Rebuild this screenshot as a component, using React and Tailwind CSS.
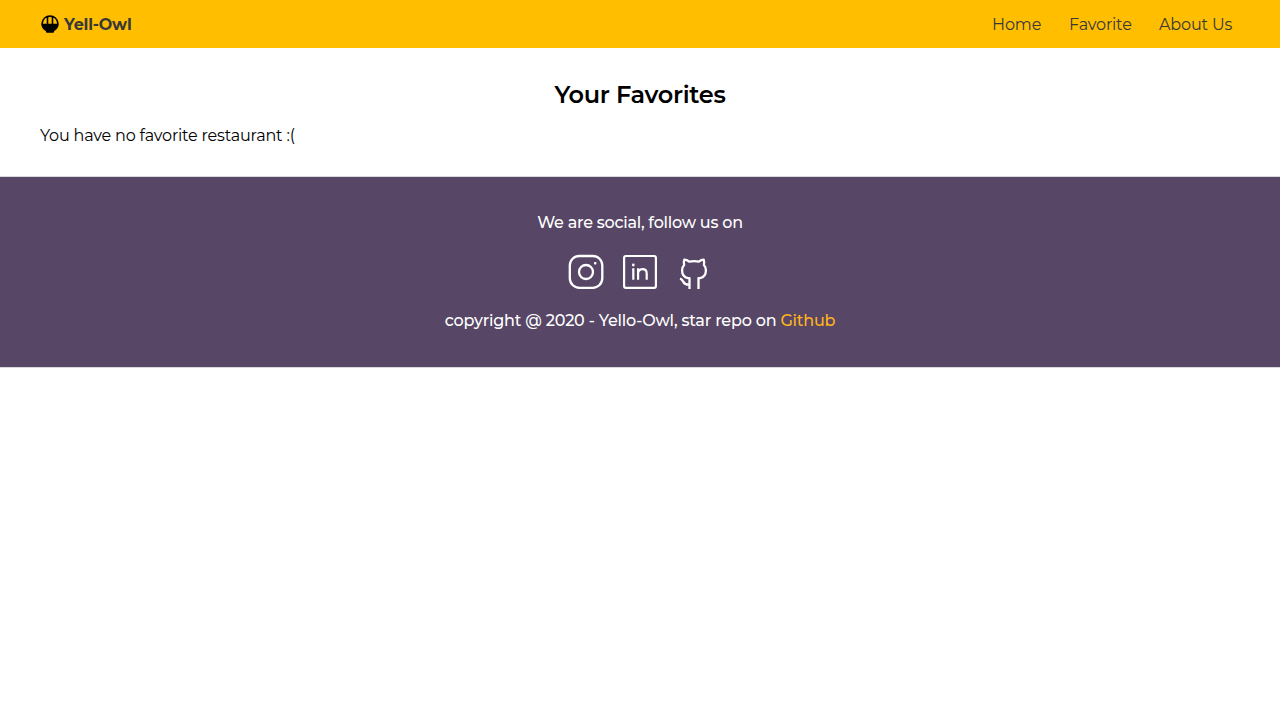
const navItems = [
  { label: 'Home', cls: 'w-[50px] tracking-[-0.1px]' },
  { label: 'Favorite', cls: 'w-[63px] tracking-[-0.15px]' },
  { label: 'About Us', cls: 'w-[74px] tracking-[-0.12px]' },
];

function BowlIcon() {
  return (
    <svg className="h-5 w-5" viewBox="0 0 20 20" aria-hidden="true">
      <path d="M2.200 10V9.200C2.600 5 5.800 2.100 10 2.100s7.400 2.900 7.800 7.100V10" fill="none" stroke="#000" strokeWidth="1.600" />
      <path d="M7.500 3v7M12.500 3v7" stroke="#000" strokeWidth="1.600" />
      <path d="M1.200 9.700h17.600c0 3.100-1.900 5.900-4.600 7.200l-.6 1.800H6.400l-.6-1.800C3.100 15.600 1.200 12.800 1.200 9.700Z" />
    </svg>
  );
}

function InstagramIcon() {
  return (
    <svg className="h-9 w-9" viewBox="0 0 36 36" fill="none" stroke="#fff" strokeWidth="2.300" aria-hidden="true">
      <rect x="1.800" y="2" width="32.500" height="31.800" rx="9.500" />
      <circle cx="18" cy="18" r="7" />
      <rect x="26" y="8" width="2.400" height="2.400" rx="0.700" fill="#fff" stroke="none" />
    </svg>
  );
}

function LinkedinIcon() {
  return (
    <svg className="h-9 w-9" viewBox="0 0 36 36" fill="none" stroke="#fff" strokeWidth="2.200" aria-hidden="true">
      <rect x="2.100" y="2" width="31.800" height="31.800" rx="1.800" />
      <path d="M11.300 14.300v11.400M16.100 14.300v11.400M16.100 19.500c0-2.600 1.600-4.300 4.300-4.300s4.300 1.700 4.300 4.300v6.200" />
      <circle cx="11.300" cy="11" r="1.400" fill="#fff" stroke="none" />
    </svg>
  );
}

function GithubIcon() {
  return (
    <svg className="h-9 w-9" viewBox="0 0 36 36" fill="none" stroke="#fff" strokeWidth="2.300" strokeLinejoin="round" aria-hidden="true">
      <path d="M13.500 35V24.100h-1.500C8.300 23.300 6.100 20.300 6.100 16.500c0-2.200.7-4.200 2-5.500-.5-1.700-.4-3.500.2-5.300 1.800.1 3.400.8 4.900 1.900 2.900-.6 6.700-.6 9.600 0 1.500-1.100 3.100-1.800 4.900-1.900.6 1.800.7 3.600.2 5.300 1.300 1.300 2 3.300 2 5.500 0 3.800-2.200 6.800-5.900 7.600h-1.500V35" />
      <path d="M13.500 30.700c-3.400.2-5.100-.8-6.300-3.100-.8-1.500-1.400-2.500-3.200-3" />
    </svg>
  );
}

export default function App() {
  return (
    <div className="min-h-screen bg-white font-['Montserrat','Inter',sans-serif] text-base leading-5 text-black">
      <header className="flex h-12 items-center justify-between bg-[#ffbe00] pr-[47px] pl-10 text-[#383838]">
        <a href="#/" className="flex items-center gap-1 font-bold tracking-[-0.2px] whitespace-nowrap">
          <BowlIcon />
          <span className="pt-0.5">Yell-Owl</span>
        </a>
        <nav className="flex gap-[27px] pt-0.5 whitespace-nowrap">
          {navItems.map((item) => (
            <a key={item.label} href="#/" className={item.cls}>{item.label}</a>
          ))}
        </nav>
      </header>
      <main className="h-32 px-10 pt-8">
        <h2 className="text-center text-2xl leading-[30px] font-semibold tracking-[-0.28px]">Your Favorites</h2>
        <p className="mt-4 tracking-[-0.17px] whitespace-nowrap">You have no favorite restaurant :(</p>
      </main>
      <footer className="flex h-48 flex-col items-center border-y border-[#dcd8df] bg-[#574665] pt-9 font-medium whitespace-nowrap text-white">
        <p className="tracking-[-0.25px]">We are social, follow us on</p>
        <div className="mt-[21px] flex gap-[18px]">
          <InstagramIcon />
          <LinkedinIcon />
          <GithubIcon />
        </div>
        <p className="mt-[21px] tracking-[-0.2px]">
          copyright @ 2020 - Yello-Owl, star repo on <a href="#/" className="text-[#ffb41c]">Github</a>
        </p>
      </footer>
    </div>
  );
}
